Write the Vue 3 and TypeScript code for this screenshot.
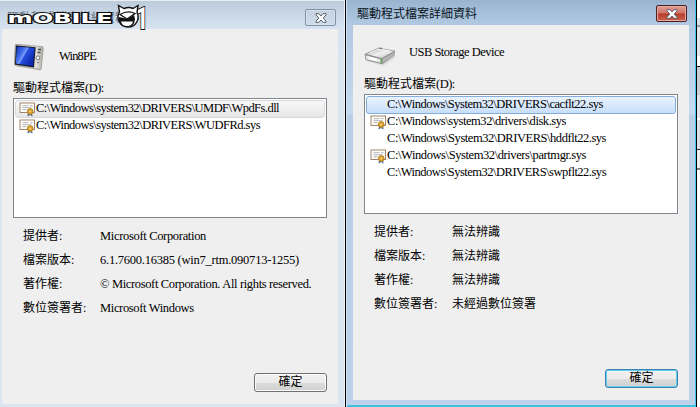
<template>
  <div class="desktop">
    <section
      v-for="dialog in dialogs"
      :key="dialog.device.text"
      class="dialog"
      :class="{ active: dialog.active }"
    >
      <header class="titlebar">
        <span class="caption">驅動程式檔案詳細資料</span>
        <button class="close" type="button">
          <svg width="12" height="10" viewBox="0 0 12 10">
            <path
              d="M1 .7h3L6 3 8 .7h3v1.2L8.2 5 11 8.1v1.2H8L6 7 4 9.3H1V8.1L3.800 5 1 1.900z"
              fill="#fff"
              stroke="#59616d"
              stroke-width="1"
            />
          </svg>
        </button>
      </header>

      <main class="client">
        <div class="device">
          <svg v-if="dialog.icon === 'player'" class="device-icon" width="32" height="32" viewBox="0 0 32 32">
            <defs>
              <linearGradient id="screen" x1="0" y1="0" x2="1" y2=".6">
                <stop offset="0" stop-color="#1030b8" />
                <stop offset=".38" stop-color="#4470ee" />
                <stop offset=".5" stop-color="#7b9df8" />
                <stop offset=".56" stop-color="#2450dd" />
                <stop offset="1" stop-color="#0c25aa" />
              </linearGradient>
              <linearGradient id="shell" x1="0" y1="0" x2="1" y2="0">
                <stop offset="0" stop-color="#a5a5a3" />
                <stop offset=".75" stop-color="#e3e1dc" />
                <stop offset="1" stop-color="#aaa8a1" />
              </linearGradient>
            </defs>
            <path d="M3 26 27 30.500l2.500-1-24-4.500z" fill="#bfbfbf" />
            <path d="M3.500 4.200 29 6.600q1.500.2 1.300 1.600L28.300 28q-.3 1.500-1.800 1.200L2.500 25.500q-1.300-.3-1.200-1.500L2.200 5.300q.1-1.200 1.300-1.100z" fill="url(#shell)" stroke="#8f8d88" stroke-width=".6" />
            <path d="M3 5.500 22.700 7.300 21 27.500 2 24.500z" fill="#14141c" />
            <path d="M3.800 6.400 21.700 8.100 20.100 26.200 2.800 23.600z" fill="url(#screen)" />
            <circle cx="24.900" cy="17.800" r="1.900" fill="#fff" stroke="#555" stroke-width=".8" />
            <path d="M25 9.500h3M24.500 12.500h3" stroke="#4c4c4c" stroke-width="1.300" />
            <path d="M24 22.500h2" stroke="#777" />
          </svg>
          <svg v-else class="device-icon" width="32" height="32" viewBox="0 0 32 32">
            <defs>
              <linearGradient id="lid" x1="0" y1="0" x2="1" y2="1">
                <stop offset="0" stop-color="#a9a9a9" />
                <stop offset=".5" stop-color="#efefef" />
                <stop offset="1" stop-color="#bdbdbd" />
              </linearGradient>
            </defs>
            <path d="M2 22 18 27.500 31 19v3L19 30 3 25z" fill="#dadada" />
            <path d="M.7 18.500 14 12.500 31 15l-.4 4.300L18.500 28 2 24z" fill="#8c8c8c" />
            <path d="M1 18 14.500 12.200 31 15 17.700 22.500z" fill="url(#lid)" stroke="#888" stroke-width=".6" />
            <path d="m6 16.500 9-3.400 11 2" fill="none" stroke="#fff" opacity=".7" />
            <path d="m1 18.700 16.500 4.200v4.600L2 23.800z" fill="#e4e4e4" stroke="#858585" stroke-width=".7" />
            <path d="m4 20.500 9 2.200v2.200L4.500 22.800z" fill="#fff" />
            <path d="m18.500 23 12-6.700-.4 2.800-11.600 8z" fill="#b6b6b6" />
            <path d="M17.200 22.500v5" stroke="#5aa355" stroke-width="1.400" />
            <path d="m15.500 12 2.500.4" stroke="#555" />
          </svg>
          <span class="line device-name" :style="fit(dialog.device)">{{ dialog.device.text }}</span>
        </div>

        <div class="list-label">驅動程式檔案<span>(D):</span></div>
        <ul class="files">
          <li v-for="(file, index) in dialog.files" :key="file.text" :class="{ selected: index === 0 }">
            <span class="badge">
              <svg v-if="file.signed" width="17" height="16" viewBox="0 0 17 16">
                <rect x="1" y="2" width="14.500" height="9.500" fill="#fffef8" stroke="#a08570" />
                <path d="M3.500 4.700h6M11 4.700h2.500M3.500 6.700h9M3.500 8.700h4" stroke="#a9aaba" stroke-width=".9" />
                <path d="m9 11.500-.5 4 2-1 .8-2zM13 11.500l.5 4-2-1-.5-2z" fill="#4a6e9c" />
                <circle cx="11.200" cy="10.500" r="2.900" fill="#d9a02b" stroke="#a57413" stroke-width=".7" />
                <circle cx="11.200" cy="10.500" r="1" fill="#f9dc84" />
              </svg>
            </span>
            <span class="line" :style="fit(file)">{{ file.text }}</span>
          </li>
        </ul>

        <dl class="details">
          <div v-for="detail in dialog.details" :key="detail.label">
            <dt>{{ detail.label }}:</dt>
            <dd class="line" :style="fit(detail)">{{ detail.text }}</dd>
          </div>
        </dl>

        <button class="ok" type="button">確定</button>
      </main>
    </section>

    <aside class="behind"></aside>

    <div class="watermark">
      <svg width="150" height="34" viewBox="0 0 150 34">
        <g class="mark">
          <text x="1.500" y="22" textLength="105" lengthAdjust="spacingAndGlyphs">mOBILE</text>
          <text class="one" x="129.500" y="28" textLength="13" lengthAdjust="spacingAndGlyphs">1</text>
        </g>
        <path d="M113.500 11 112.500 4.500l5.500 3q5-2 9 0l5-3-1 7a10 10 0 1 1-17.500-.5z" fill="#fff" stroke="#111" stroke-width="1.400" />
        <path d="M113 16q-1 8.500 6.500 10 9 1 9.500-8l-1-4-6.500 4z" fill="#111" />
        <path d="M114 13.500 121 18 129 12.500q-7-3.500-15 1z" fill="#fff" stroke="#111" stroke-width="1.300" />
        <path d="M115 20.500h12q-1 4.500-6 4.500t-6-4.500z" fill="#fff" />
      </svg>
    </div>
  </div>
</template>

<script setup lang="ts">
interface Line {
  text: string;
  width: number;
}

interface Dialog {
  active: boolean;
  icon: "player" | "drive";
  device: Line;
  files: (Line & { signed: boolean })[];
  details: (Line & { label: string })[];
}

const dialogs: Dialog[] = [
  {
    active: false,
    icon: "player",
    device: { text: "Win8PE", width: 37 },
    files: [
      { text: "C:\\Windows\\system32\\DRIVERS\\UMDF\\WpdFs.dll", width: 243, signed: true },
      { text: "C:\\Windows\\system32\\DRIVERS\\WUDFRd.sys", width: 224, signed: true },
    ],
    details: [
      { label: "提供者", text: "Microsoft Corporation", width: 106 },
      { label: "檔案版本", text: "6.1.7600.16385 (win7_rtm.090713-1255)", width: 199 },
      { label: "著作權", text: "© Microsoft Corporation. All rights reserved.", width: 212 },
      { label: "數位簽署者", text: "Microsoft Windows", width: 94 },
    ],
  },
  {
    active: true,
    icon: "drive",
    device: { text: "USB Storage Device", width: 95 },
    files: [
      { text: "C:\\Windows\\System32\\DRIVERS\\cacflt22.sys", width: 216, signed: false },
      { text: "C:\\Windows\\system32\\drivers\\disk.sys", width: 179, signed: true },
      { text: "C:\\Windows\\System32\\DRIVERS\\hddflt22.sys", width: 219, signed: false },
      { text: "C:\\Windows\\System32\\drivers\\partmgr.sys", width: 199, signed: true },
      { text: "C:\\Windows\\System32\\DRIVERS\\swpflt22.sys", width: 219, signed: false },
    ],
    details: [
      { label: "提供者", text: "無法辨識", width: 48 },
      { label: "檔案版本", text: "無法辨識", width: 48 },
      { label: "著作權", text: "無法辨識", width: 48 },
      { label: "數位簽署者", text: "未經過數位簽署", width: 84 },
    ],
  },
];

const ctx = document.createElement("canvas").getContext("2d")!;

// spread the letters so that a line takes its dialog width
function fit({ text, width }: Line) {
  const size = text.charCodeAt(0) > 0x3000 ? 12 : 12.5;
  ctx.font = `${size}px "Liberation Serif", "Noto Sans CJK TC", serif`;
  const spacing = (width - ctx.measureText(text).width) / text.length;
  return { fontSize: `${size}px`, letterSpacing: `${spacing.toFixed(3)}px` };
}
</script>

<style>
body {
  margin: 0;
  overflow: hidden;
}
</style>

<style scoped>
.desktop {
  position: relative;
  display: flex;
  width: 700px;
  height: 407px;
  overflow: hidden;
  background: #fff;
  color: #000;
  font: 12px/16px "Liberation Serif", "Noto Sans CJK TC", serif;
}
.dialog {
  box-sizing: border-box;
  width: 346px;
  height: 407px;
  padding: 0 7px 0 2px;
  border-right: 1px solid #000;
  background: linear-gradient(#bccbdb 0, #d7e3f0 29px, #dae5f0 60px);
  box-shadow: inset 0 1px #e8eef4, inset -1px 0 #eaf3f9;
}
.dialog.active {
  width: 351px;
  padding: 0 7px;
  background: linear-gradient(#9ab4d0 0, #b1c9e3 25px, #c6daef 114px, #b9cfe8 115px, #bcd1ea 100%);
  box-shadow: inset 1px 0 #d3e3f3, inset -1px 0 #45c4e9, inset 0 -2px #3fc0e0;
}
.titlebar {
  display: flex;
  align-items: flex-start;
  justify-content: space-between;
  box-sizing: border-box;
  height: 29px;
  padding: 9px 2px 0 5px;
}
.active .titlebar {
  height: 25px;
  padding: 5px 2px 0 4px;
}
.caption {
  color: #62707f;
  line-height: 18px;
}
.active .caption {
  color: #0a1420;
}
.close {
  display: flex;
  align-items: center;
  justify-content: center;
  box-sizing: border-box;
  width: 31px;
  height: 17px;
  padding: 0;
  border: 1px solid #8291aa;
  border-radius: 2px;
  background: linear-gradient(#c5d1df, #cfdce9);
  box-shadow: inset 0 0 0 1px #d6e1ec;
}
.active .close {
  border-color: #511d22;
  background: linear-gradient(#e0a197, #cf7265 48%, #b43a29 52%, #cc6150);
  box-shadow: inset 0 0 0 1px #e1aaa1;
}
.client {
  display: flex;
  flex-direction: column;
  box-sizing: border-box;
  height: 375px;
  padding: 11px 11px 12px;
  background: #efefef;
}
.device {
  display: flex;
  align-items: center;
  height: 32px;
}
.device-icon {
  flex: none;
}
.device-name {
  margin-left: 14px;
}
.active .device-name {
  margin-left: 13px;
}
.line {
  white-space: pre;
}
.list-label {
  height: 16px;
  margin-top: 8px;
  padding-bottom: 2px;
}
.list-label span {
  font-size: 12.5px;
  letter-spacing: -0.5px;
}
.files {
  box-sizing: border-box;
  height: 120px;
  margin: 0;
  padding: 1px;
  border: 1px solid #7f858d;
  background: #fff;
  list-style: none;
}
.files li {
  display: flex;
  align-items: center;
  box-sizing: border-box;
  height: 17px;
  padding-left: 4px;
}
.files li.selected {
  height: 18px;
  margin-bottom: -1px;
  padding-left: 3px;
  border: 1px solid #d9d9d9;
  border-radius: 3px;
  background: linear-gradient(#f8f8f8, #e6e6e6);
}
.active .files li.selected {
  border-color: #84acdd;
  background: linear-gradient(#eaf3fd, #c7dffc);
}
.files .line {
  padding-bottom: 2px;
}
.badge {
  display: flex;
  width: 17px;
}
.details {
  margin: 6px 0 0 10px;
}
.details div {
  display: flex;
  align-items: center;
  height: 24px;
}
.details dt {
  width: 77px;
}
.active .details dt {
  width: 78px;
}
.details dd {
  margin: 0;
}
.ok {
  align-self: flex-end;
  width: 73px;
  height: 19px;
  margin-top: auto;
  padding: 0;
  border: 1px solid #707070;
  border-radius: 3px;
  background: linear-gradient(#f2f2f2, #ebebeb 50%, #dddddd 51%, #cfcfcf);
  box-shadow: inset 0 0 0 1px #fafafa;
  color: #000;
  font: inherit;
  line-height: 15px;
}
.active .ok {
  border-color: #3c7fb1;
  box-shadow: inset 0 0 0 1px #5fd0ee;
}
.behind {
  flex: 1;
  background: linear-gradient(
    #fff 18px, #d5e3ef 18px 25px, #929aa8 25px 27px, #e4e4ee 27px 56px,
    #fff 56px 66px, #111 66px 67px, #c9ced6 67px 95px, #e4e4ee 95px 118px,
    #fff 118px 120px, #dcdce8 120px 149px, #333 149px 150px, #eee 150px 168px,
    #777 168px 170px, #fff 170px
  );
}
.watermark {
  position: absolute;
  top: 1px;
  left: 6px;
}
.watermark svg {
  display: block;
}
.mark {
  fill: #fff;
  stroke: #111;
  stroke-width: 2px;
  paint-order: stroke;
  font: bold 14px "DejaVu Sans", sans-serif;
}
.mark .one {
  font: bold 32px Roboto, sans-serif;
}
</style>
